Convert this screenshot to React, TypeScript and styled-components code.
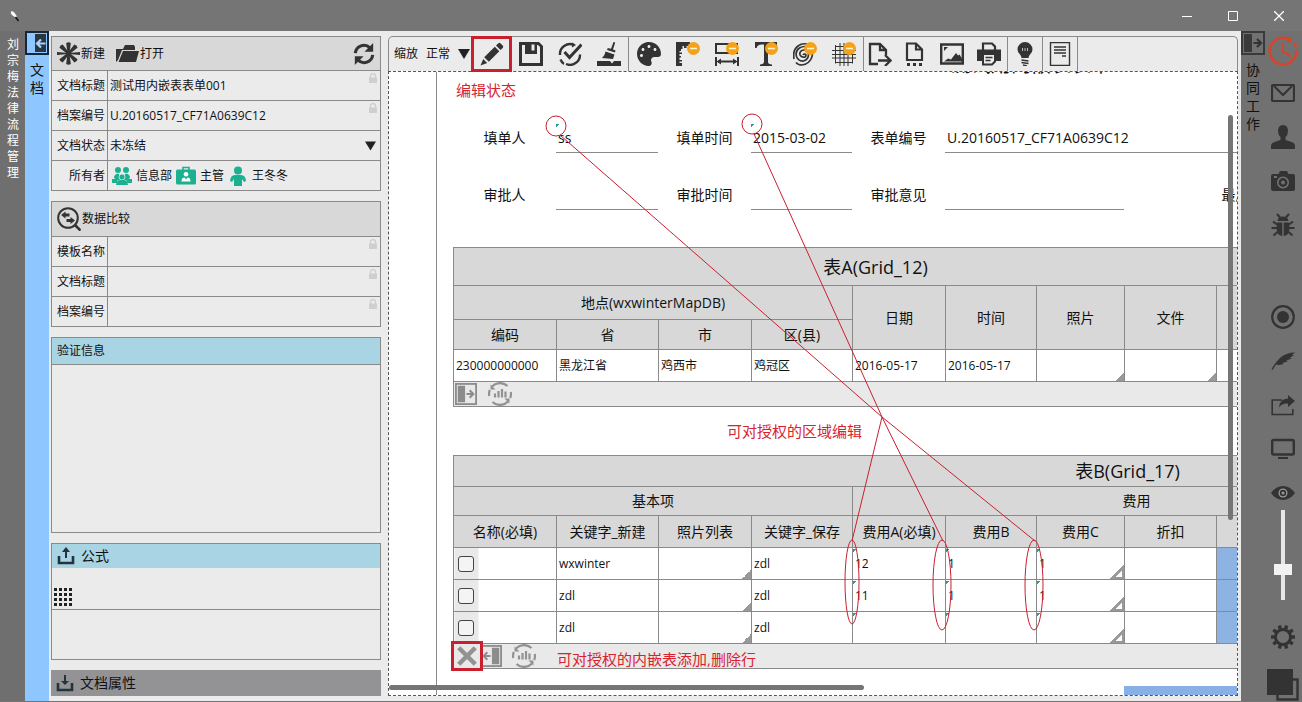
import React from "react";
import styled, { createGlobalStyle, css } from "styled-components";
import { FaPalette } from "react-icons/fa";

const INK = "#333333";
const LINE = "#8a8a8a";
const RED = "#c8202f";
const BAR = "#757575";
const ORANGE = "#f5a21b";
const GREEN = "#1bb190";

const GlobalStyle = createGlobalStyle`
  *, *::before, *::after { box-sizing: border-box; }
  body {
    margin: 0;
    background: #ebebeb;
    color: #111;
    font-family: "Open Sans", "Noto Sans CJK SC", sans-serif;
    font-size: 12px;
    line-height: 18px;
  }
  button, input, select { font: inherit; color: inherit; }
  svg { display: block; flex: none; }
`;

/* ---------- shell ---------- */

const Shell = styled.div`
  height: 100vh;
  display: flex;
  flex-direction: column;
  border-bottom: 1px solid ${BAR};
  overflow: hidden;
`;

const TitleBar = styled.header`
  flex: none;
  height: 31px;
  padding-left: 9px;
  display: flex;
  align-items: center;
  background: ${BAR};
  color: #fff;
`;

const WindowButtons = styled.div`
  margin-left: auto;
  display: flex;
`;

const WindowButton = styled.button`
  width: 46px;
  height: 31px;
  padding: 0;
  border: 0;
  background: none;
  color: #fff;
  display: grid;
  place-items: center;
`;

const Body = styled.div`
  flex: 1;
  min-height: 0;
  display: flex;
`;

const OwnerRail = styled.aside`
  flex: none;
  width: 25px;
  padding: 6px 6px 0 7px;
  background: #6f6f6f;
  color: #fff;
  line-height: 16px;
  word-break: break-all;
`;

const SideTab = styled.aside<{ $tone: string }>`
  flex: none;
  width: 24px;
  display: flex;
  flex-direction: column;
  align-items: center;
  background: ${(p) => p.$tone};
`;

const SideToggle = styled.button`
  width: 24px;
  height: 24px;
  padding: 0;
  border: 0;
  background: none;
`;

const SideLabel = styled.div`
  width: 14px;
  margin-top: 6px;
  font-size: 14px;
  line-height: 18px;
  word-break: break-all;
`;

/* ---------- left panel ---------- */

const Properties = styled.section`
  flex: none;
  width: 339px;
  padding: 5px 7px 5px 2px;
  display: flex;
  flex-direction: column;
  gap: 10px;
`;

const Card = styled.div<{ $grow?: boolean }>`
  border: 1px solid ${LINE};
  ${(p) => p.$grow && css`flex: 1; min-height: 0;`}
`;

const CardHead = styled.div<{ $height: number; $tone?: string; $big?: boolean; $line?: boolean }>`
  height: ${(p) => p.$height}px;
  padding: 0 5px;
  display: flex;
  align-items: center;
  gap: ${(p) => (p.$big ? 6 : 10)}px;
  background: ${(p) => p.$tone ?? "#d8d8d8"};
  font-size: ${(p) => (p.$big ? 14 : 12)}px;
  ${(p) => p.$line && css`border-bottom: 1px solid ${LINE};`}
`;

const HeadButton = styled.button`
  padding: 0;
  border: 0;
  background: none;
  display: flex;
  align-items: center;
  gap: 1px;
  &:last-child:not(:only-child) { margin-left: auto; }
`;

const FormRow = styled.div`
  display: flex;
  height: 30px;
  border-top: 1px solid ${LINE};
`;

const RowLabel = styled.label`
  flex: none;
  width: 56px;
  padding-right: 2px;
  border-right: 1px solid ${LINE};
  line-height: 29px;
  text-align: right;
`;

const RowValue = styled.div`
  flex: 1;
  min-width: 0;
  display: flex;
  position: relative;
`;

const PlainInput = styled.input`
  flex: 1;
  min-width: 0;
  padding: 0 2px;
  border: 0;
  background: none;
  outline: none;
`;

const PlainSelect = styled.select`
  flex: 1;
  min-width: 0;
  padding: 0 2px;
  border: 0;
  background: none;
  appearance: none;
  outline: none;
`;

const LockMark = styled.span`
  position: absolute;
  top: 2px;
  right: 2px;
`;

const Arrow = styled.span`
  position: absolute;
  right: 4px;
  top: 50%;
  transform: translateY(-50%);
  pointer-events: none;
`;

const Owners = styled.div`
  display: flex;
  align-items: center;
  gap: 4px;
  padding-left: 4px;
`;

const FormulaBody = styled.div`
  height: 42px;
  padding: 20px 2px 0;
  border-bottom: 1px solid ${LINE};
`;

const FormulaSpace = styled.div`
  height: 49px;
`;

/* ---------- editor ---------- */

const Editor = styled.main`
  flex: 1;
  min-width: 0;
  padding: 5px 3px 5px 0;
  display: flex;
  flex-direction: column;
`;

const Toolbar = styled.div`
  flex: none;
  height: 35px;
  display: flex;
  border: 1px solid ${LINE};
  border-bottom: 0;
  border-radius: 5px 5px 0 0;
`;

const ZoomField = styled.label`
  flex: none;
  width: 83px;
  padding-left: 5px;
  display: flex;
  align-items: center;
  gap: 8px;
  white-space: nowrap;
`;

const ZoomSelect = styled.span`
  position: relative;
  display: flex;
  width: 46px;
`;

const ZoomArrow = styled(Arrow)`
  right: 2px;
`;

const ZoomNative = styled(PlainSelect)`
  padding: 0;
`;

const ToolGroup = styled.div`
  display: flex;
  border-right: 1px solid ${LINE};
`;

const Tool = styled.button<{ $width?: number; $marked?: boolean }>`
  width: ${(p) => p.$width ?? 39}px;
  padding: 0;
  border: 0;
  background: none;
  color: ${INK};
  display: grid;
  place-items: center;
  ${(p) => p.$marked && css`
    outline: 3px solid ${RED};
    outline-offset: -2px;
    position: relative;
    z-index: 1;
  `}
`;

const Canvas = styled.div`
  flex: 1;
  min-height: 0;
  position: relative;
  overflow: hidden;
  background: #fff;
  border: 1px dashed #555;
`;

const Sheet = styled.article`
  width: 1440px;
  min-height: 100%;
  margin-left: 47px;
  padding-left: 16px;
  border-left: 1px solid ${LINE};
  display: flow-root;
`;

const SheetTitle = styled.h1`
  width: 1156px;
  margin: -21px 0 -1px;
  font-size: 20px;
  font-weight: 400;
  line-height: 28px;
  text-align: center;
`;

const Note = styled.p<{ $height: number; $indent: number }>`
  margin: 0;
  padding-left: ${(p) => p.$indent}px;
  color: #d8232f;
  font-size: 15px;
  line-height: ${(p) => p.$height}px;
  white-space: nowrap;
`;

const Fields = styled.div`
  margin: 21px 0 37px;
  display: grid;
  grid-template-columns: 103px 102px 93px 101px 93px 91px 88px 92px 81px;
  grid-auto-rows: 30px;
  row-gap: 27px;
  font-size: 14px;
`;

const FieldLabel = styled.label`
  line-height: 30px;
  text-align: center;
  white-space: nowrap;
`;

const editMark = css`
  background-image: linear-gradient(135deg, #2a9d8f 50%, transparent 50%);
  background-repeat: no-repeat;
  background-size: 4px 4px;
  background-position: 0 1px;
`;

const FieldInput = styled.input<{ $span?: number; $editable?: boolean }>`
  grid-column: span ${(p) => p.$span ?? 1};
  min-width: 0;
  padding: 0 2px;
  border: 0;
  border-bottom: 1px solid ${LINE};
  background: none;
  outline: none;
  ${(p) => p.$editable && editMark}
`;

const Grid = styled.table<{ $width: number }>`
  width: ${(p) => p.$width}px;
  table-layout: fixed;
  border-collapse: collapse;
  line-height: 18px;
`;

const Row = styled.tr<{ $height: number }>`
  height: ${(p) => p.$height}px;
`;

const Head = styled.th<{ $title?: boolean }>`
  padding: 0;
  border: 1px solid ${LINE};
  background: #d8d8d8;
  font-size: ${(p) => (p.$title ? 18 : 14)}px;
  font-weight: 400;
  white-space: nowrap;
`;

type Corner = "solid" | "hollow";

const Cell = styled.td<{ $corner?: Corner; $edit?: boolean; $blue?: boolean }>`
  padding: 0 2px;
  border: 1px solid ${LINE};
  white-space: nowrap;
  ${(p) => p.$blue && css`background-color: #8db3e2;`}
  ${(p) => p.$edit && !p.$corner && editMark}
  ${(p) => p.$corner === "solid" && css`
    background: linear-gradient(135deg, transparent 50%, #999 50%) right bottom / 9px 9px no-repeat;
  `}
  ${(p) => p.$corner === "hollow" && css`
    background:
      linear-gradient(135deg, #2a9d8f 50%, transparent 50%) 0 1px / 4px 4px no-repeat,
      linear-gradient(#999, #999) right bottom / 12px 2px no-repeat,
      linear-gradient(#999, #999) right bottom / 2px 12px no-repeat,
      linear-gradient(135deg, transparent 50%, #999 50%, #999 64%, transparent 64%) right bottom / 14px 14px no-repeat;
  `}
`;

const PickCell = styled(Cell)`
  padding: 0;
  background: linear-gradient(90deg, #e9e9e9 24px, #fff 24px);
`;

const Tick = styled.input`
  appearance: none;
  display: block;
  width: 16px;
  height: 16px;
  margin: 0 0 0 4px;
  border: 1px solid #444;
  border-radius: 3px;
  background: #f4f4f4;
`;

const FootCell = styled.td`
  padding: 0;
  border: 1px solid ${LINE};
  background: #e9e9e9;
`;

const FootBar = styled.div`
  height: 24px;
  display: flex;
  align-items: flex-start;
`;

const FootButton = styled.button<{ $width: number; $marked?: boolean }>`
  width: ${(p) => p.$width}px;
  height: 24px;
  padding: 0;
  border: 0;
  background: none;
  color: #929292;
  display: grid;
  place-items: center;
  ${(p) => p.$marked && css`outline: 3px solid ${RED}; position: relative;`}
`;

const BlueStrip = styled.div`
  width: 177px;
  height: 32px;
  margin: 17px 0 0 671px;
  background: #86b0e6;
`;

const Overlay = styled.svg`
  position: absolute;
  top: 0;
  left: 0;
  width: 100%;
  height: 100%;
  pointer-events: none;
`;

const ScrollThumb = styled.div<{ $axis: "x" | "y" }>`
  position: absolute;
  border-radius: 3px;
  background: ${BAR};
  ${(p) => (p.$axis === "y"
    ? css`right: 4px; top: 43px; width: 5px; height: 65%;`
    : css`left: 0; bottom: 5px; height: 5px; width: 56%;`)}
`;

/* ---------- right rail ---------- */

const ActionRail = styled.nav`
  flex: none;
  width: 37px;
  padding: 5px 2px 0 0;
  display: flex;
  flex-direction: column;
  align-items: center;
  background: #717171;
`;

const ActionGroup = styled.div<{ $top: number }>`
  margin-top: ${(p) => p.$top}px;
  display: flex;
  flex-direction: column;
  align-items: center;
  gap: 20px;
`;

const Action = styled.button`
  padding: 0;
  border: 0;
  background: none;
  color: ${INK};
`;

const Slider = styled.input`
  appearance: none;
  writing-mode: vertical-lr;
  direction: rtl;
  width: 18px;
  height: 90px;
  margin: 5px 0 0;
  background: linear-gradient(90deg, transparent 7px, #e6e6e6 7px, #e6e6e6 11px, transparent 11px);
  &::-webkit-slider-thumb {
    appearance: none;
    width: 18px;
    height: 11px;
    background: #f2f2f2;
  }
`;

/* ---------- icons ---------- */

const Icon = ({ size = 24, box = "0 0 24 24", children }: { size?: number; box?: string; children: React.ReactNode }) => (
  <svg width={size} height={size} viewBox={box} fill="currentColor" aria-hidden="true">{children}</svg>
);

const Minus = () => (
  <g>
    <circle cx="17.500" cy="6.500" r="6.500" fill={ORANGE} />
    <path d="M14 6.500h7" stroke="#fff3c8" strokeWidth="1.600" />
  </g>
);

const AsteriskIcon = () => (
  <Icon size={23}>
    {[0, 45, 135, 180, 225, 315].map((a) => (
      <path key={a} d="M11 12 9.600 1q2.400-1.600 4.800 0L13 12z" fill={INK} transform={`rotate(${a} 12 12)`} />
    ))}
    <path d="M0 10.500l12 1 12-1v3l-12-1-12 1z" fill={INK} />
  </Icon>
);

const FolderIcon = () => (
  <Icon>
    <path d="M1 20V7h7l2-4h9l1 2v3H7L3 18z" fill={INK} />
    <path d="M8 9h16l-3 11H3.500z" fill={INK} />
  </Icon>
);

const RefreshIcon = () => (
  <Icon size={22}>
    <g fill="none" stroke={INK} strokeWidth="3.400">
      <path d="M2.500 11A9.500 9.500 0 0 1 18.500 5.200" />
      <path d="M21.500 13A9.500 9.500 0 0 1 5.500 18.800" />
    </g>
    <path d="M22 0v9.500h-9.500zM2 24v-9.500h9.500z" fill={INK} />
  </Icon>
);

const CompareIcon = () => (
  <Icon>
    <circle cx="11" cy="11" r="9.800" fill="none" stroke={INK} strokeWidth="2" />
    <path d="M18 18l5.500 5.500" stroke={INK} strokeWidth="2.600" />
    <path d="M4 8l4.500-3.500v2h4v3h-4v2zM18 13.500 13.500 10v2h-4v3h4v2z" fill={INK} />
  </Icon>
);

const LockIcon = () => (
  <Icon size={10} box="0 0 10 10">
    <path d="M2.500 5V3a2.500 2.500 0 0 1 5 0v2" fill="none" stroke="#cfcfcf" strokeWidth="1.300" />
    <path d="M1 4.500h8V10H1z" fill="#cfcfcf" />
  </Icon>
);

const DownTriangle = ({ size = 12 }: { size?: number }) => (
  <svg width={size} height="10" viewBox="0 0 12 10" aria-hidden="true"><path d="M0 0h12L6 10z" fill="#222" /></svg>
);

const TeamIcon = () => (
  <Icon size={20} box="0 0 20 20">
    <g fill={GREEN}>
      <circle cx="6" cy="4" r="3" /><circle cx="14" cy="4" r="3" />
      <path d="M2 12q0-4 4-4.500l4 4 4-4q4 .5 4 4.500l-3 2H5z" />
      <path d="M0 13h6l-1 4H0zM20 13h-6l1 4h5z" />
      <circle cx="10" cy="11" r="3" stroke="#ebebeb" strokeWidth=".8" />
      <path d="M4 19q1-5 4-5h4q3 0 4 5z" />
    </g>
  </Icon>
);

const BadgeIcon = () => (
  <Icon size={20} box="0 0 20 20">
    <path d="M7 4V1.500h6V4" fill="none" stroke={GREEN} strokeWidth="1.600" />
    <rect x="0" y="3.500" width="20" height="15" rx="1.500" fill={GREEN} />
    <circle cx="10" cy="8.300" r="2.300" fill="#fff" />
    <path d="M5.500 15.500q0-4 3-4l1.500 2 1.500-2q3 0 3 4z" fill="#fff" />
  </Icon>
);

const PersonIcon = () => (
  <Icon size={20} box="0 0 20 20">
    <g fill={GREEN}>
      <circle cx="10" cy="4.500" r="4" />
      <path d="M2 15q.5-6 5-6h6q4.500 0 5 6l-2 1-2-3v7H6v-7l-2 3z" />
    </g>
  </Icon>
);

const TrayIcon = ({ up }: { up?: boolean }) => (
  <Icon size={18} box="0 0 18 18">
    <path d="M2 9v7h14V9" fill="none" stroke="#24343c" strokeWidth="2.600" />
    <path d={up ? "M9 0l4 5h-3v6H8V5H5z" : "M9 11l4-4h-3V1H8v6H5z"} fill="#24343c" />
  </Icon>
);

const DotsIcon = () => (
  <Icon size={18} box="0 0 18 18">
    {[0, 5, 10, 15].map((y) => [0, 5, 10, 15].map((x) => (
      <rect key={`${x}-${y}`} x={x} y={y} width="3" height="3" fill="#222" />
    )))}
  </Icon>
);

type PanelIconProps = { size: number; side: "left" | "right"; line: string; bar: string; arrow: string; inside?: boolean };

const PanelIcon = ({ size, side, line, bar, arrow, inside }: PanelIconProps) => (
  <Icon size={size}>
    <g transform={side === "right" ? "translate(24 0) scale(-1 1)" : undefined}>
      <rect x="1" y="1" width="22" height="22" fill="none" stroke={line} strokeWidth="2" />
      <rect x="3" y="3" width={inside ? 11 : 8} height="18" fill={bar} />
      <path
        d={inside ? "M3.500 12.500h8M8 8.500l4 4-4 4" : "M12.500 12h7.500M16 8l4 4-4 4"}
        fill="none" stroke={arrow} strokeWidth="2.200"
      />
    </g>
  </Icon>
);

const StatsIcon = () => (
  <Icon>
    <g fill="none" stroke="currentColor" strokeWidth="2.200">
      <path d="M1.200 14A11 11 0 0 1 1.800 8M4 4.500A11 11 0 0 1 19.500 4M22.800 10A11 11 0 0 1 22.200 16M20 19.500A11 11 0 0 1 4.500 20" />
      <path d="M7 15.500v-4M10.500 15.500V9M14 15.500V7M17.500 15.500v-6" />
    </g>
    <path d="M2.500 2.500v5h5zM21.500 21.500v-5h-5z" />
  </Icon>
);

const PencilIcon = () => (
  <Icon>
    <path d="M4.200 15.300 14.800 4.800l4.500 4.500L8.800 19.800zM3.200 17l4 4L.5 23.500zM16 3.600 18.200 1.400q1.200-1.200 2.400 0l2.100 2.100q1.200 1.200 0 2.400l-2.200 2.200z" />
  </Icon>
);

const SaveIcon = () => (
  <Icon>
    <path fillRule="evenodd" d="M0 0h20l4 4v20H0zM3 3v18h18V5l-2-2h-1v9H6V3zM12.500 2.500v6h3v-6z" />
  </Icon>
);

const CheckIcon = () => (
  <Icon>
    <g fill="none" stroke="currentColor">
      <path d="M2 13A10 10 0 0 1 16 3M22 12.500A10 10 0 0 1 8 22M2.500 17.500Q4 21 6 21.800" strokeWidth="2.400" />
      <path d="M6.500 10l5 5.500L23.500 2.500" strokeWidth="3" />
    </g>
    <path d="M14 .5l4 2.500-4 2.500z" />
  </Icon>
);

const BroomIcon = () => (
  <Icon>
    <path d="M16.500 0l1.700.5-2.200 7 2.500 1-.5 2-8-2.500.8-2 3.200.8zM8.500 9.500l9 3-1.500 4.500-11-1q3-2.500 3.500-6.500zM0 24v-5h13l2 2.500 2-2.500h7v5z" />
  </Icon>
);

const RulerIcon = () => (
  <Icon>
    <path d="M0 0h14v6h-2V4h-1.500v2H8V4H6.500v3H5v2H3.500v1.500H6V12H3.500v2H5v1.500H3.500V18H6v1.500H3.500V21H6v3H0z" />
    <Minus />
  </Icon>
);

const WidthIcon = () => (
  <Icon>
    <path d="M1 2h21v9H1zM1 15v9M23 15v9M3 19.500h18" fill="none" stroke="currentColor" strokeWidth="2" />
    <path d="M1.500 19.500 6 16.500v6zM22.500 19.500 18 16.500v6z" />
    <Minus />
  </Icon>
);

const TextIcon = () => (
  <Icon>
    <path d="M1 0h22v6h-1.500q-1-3.500-5-3.500H14V20q0 2 4 2.500V24H6v-1.500q4-.5 4-2.500V2.500H7.500q-4 0-5 3.500H1z" />
    <Minus />
  </Icon>
);

const SpiralIcon = () => (
  <Icon>
    <path d="M10 13a1.500 1.500 0 1 1 1 2M11 15a3.500 3.500 0 0 1-4-4.500Q8 8 11 8t4.500 4.500q0 5-5 6.500-5 .5-7-4.500Q2 9 6.500 6q5-3 10 0Q21 10 18.500 16T9 23Q5 23 3 20.500M1 17Q-.5 8 5 4 9 1 14 2" fill="none" stroke="currentColor" strokeWidth="1.700" />
    <Minus />
  </Icon>
);

const MeshIcon = () => (
  <Icon>
    <path d="M0 8.500h24M0 16h24M8 1v23M16 1v23M3 4.500h10M3 20.500h18M3.500 3v18.500M20.500 9v12.500M0 12.500h24M12 1v23" fill="none" stroke="currentColor" strokeWidth="1" />
    <Minus />
  </Icon>
);

const ExportIcon = () => (
  <Icon>
    <path d="M10 22H2V2h10l6 6v5M12 2v6h6M10 18.500h11M17 13l5.500 5.500L17 24" fill="none" stroke="currentColor" strokeWidth="2.300" />
  </Icon>
);

const PageDotsIcon = () => (
  <Icon>
    <path d="M5 18V1.500h9l6 6V18zM14 1.500v6h6" fill="none" stroke="currentColor" strokeWidth="2.200" />
    <path d="M5 21h3v3H5zM11 21h3v3h-3zM17 21h3v3h-3z" />
  </Icon>
);

const ImageIcon = () => (
  <Icon>
    <path d="M1.200 2.500h21.600v19H1.200z" fill="none" stroke="currentColor" strokeWidth="2.400" />
    <path d="M4 19.500l4-3 3 1 5-6.500 2 2.500 1.500-1 2.500 4v3zM4 5h4l-4 4z" />
  </Icon>
);

const PrinterIcon = () => (
  <Icon>
    <path d="M6 8V1.500h9l3 3V8" fill="none" stroke="currentColor" strokeWidth="2.200" />
    <path d="M0 7.500h24V19h-5v-6H5v6H0z" />
    <path d="M6 13v9.500h9l3-3V13" fill="none" stroke="currentColor" strokeWidth="2" />
    <path d="M8.500 15.500h7M8.500 18.500h5" stroke="currentColor" strokeWidth="1.400" />
  </Icon>
);

const BulbIcon = () => (
  <Icon>
    <path d="M12 0a7.500 7.500 0 0 1 7.500 7.500q0 3-2.500 5-1.500 1.500-1.500 3.500h-7q0-2-1.500-3.500-2.500-2-2.500-5A7.500 7.500 0 0 1 12 0z" />
    <path d="M8.500 18l7 1M8.500 20.500l7 1M10 23l4 1" stroke="currentColor" strokeWidth="1.400" />
    <path d="M9.500 6v3M12 6v3M14.500 6v3" fill="none" stroke="#bbb" strokeWidth="1" />
  </Icon>
);

const MemoIcon = () => (
  <Icon>
    <path d="M2.500.5h19v23h-19zM6 5h12M6 8h12M6 11h12M14 14h4" fill="none" stroke="currentColor" strokeWidth="1.400" />
  </Icon>
);

const ClockIcon = () => (
  <Icon size={30} box="0 0 30 30">
    <path d="M22 3.800A13.300 13.300 0 1 0 28.300 14M28 11l-1.500-3.500" fill="none" stroke="#d8432b" strokeWidth="2.600" />
    <path d="M17 5.500 24 .5v6z" fill="#d8432b" />
    <path d="M15 7v9l8 4" fill="none" stroke="#d8432b" strokeWidth="2" />
  </Icon>
);

const MailIcon = () => (
  <Icon>
    <rect x="1" y="4" width="22" height="16" rx="1" fill="none" stroke="currentColor" strokeWidth="2.200" />
    <path d="M3 5l9 9 9-9" fill="none" stroke="currentColor" strokeWidth="2" />
  </Icon>
);

const UserIcon = () => (
  <Icon>
    <path d="M12 0q5 0 5 6 0 4-2.500 6v3l6 2q3.500 1 3.500 4v3H0v-3q0-3 3.500-4l6-2v-3Q7 10 7 6q0-6 5-6z" />
  </Icon>
);

const CameraIcon = () => (
  <Icon>
    <path fillRule="evenodd" d="M2 5h5.500L9 2h7l1.500 3H22q2 0 2 2v13q0 2-2 2H2q-2 0-2-2V7q0-2 2-2zm10 2.500a6 6 0 1 0 .01 0zM3 7h3v2H3z" />
    <circle cx="12" cy="13.500" r="4.400" /><circle cx="12" cy="13.500" r="2" fill="#717171" />
  </Icon>
);

const BugIcon = () => (
  <Icon>
    <path d="M6.500 8Q7 3.500 12 3.500T17.500 8zM6 9.500h5.300V23Q5.500 22 5.500 15zM18 9.500h-5.300V23q5.800-1 5.800-8z" />
    <path d="M9 4.500 6 1M15 4.500 18 1M6 11.500 2 8.500M18 11.500l4-3M6 15H.5M18 15h5.500M6.500 19l-4 3.500M17.500 19l4 3.500" stroke="currentColor" strokeWidth="2" />
  </Icon>
);

const RecordIcon = () => (
  <Icon>
    <circle cx="12" cy="12" r="10.800" fill="none" stroke="currentColor" strokeWidth="2.200" />
    <circle cx="12" cy="12" r="6" />
  </Icon>
);

const FeatherIcon = () => (
  <Icon>
    <path d="M.5 20.500Q3 15 9 9q6-5.500 15-5.500l-3 2.500 2 .5-4 2 1.500 1-5 2 1 1-5 1.500 1 1q-5 1.500-7.500.5L1.500 21z" />
  </Icon>
);

const ShareIcon = () => (
  <Icon>
    <path d="M11 7H1.200v14.500h20.600V16" fill="none" stroke="currentColor" strokeWidth="1.600" />
    <path d="M17 2l7 6-7 6v-3.500q-6-.5-9 4 .5-8.500 9-9z" />
  </Icon>
);

const MonitorIcon = () => (
  <Icon>
    <rect x="1.200" y="3" width="21.600" height="14.500" rx="1.500" fill="none" stroke="currentColor" strokeWidth="2.400" />
    <path d="M7 20h10v2H7z" />
  </Icon>
);

const EyeIcon = () => (
  <Icon>
    <path d="M0 12Q5 5 12 5t12 7q-5 7-12 7T0 12z" />
    <circle cx="12" cy="12" r="4.500" fill="#999" /><circle cx="12" cy="12" r="3.200" /><circle cx="12" cy="12" r="1.500" fill="#999" />
  </Icon>
);

const GearIcon = () => (
  <Icon>
    <circle cx="12" cy="12" r="7.600" fill="none" stroke="currentColor" strokeWidth="3" />
    {[18, 54, 90, 126, 162, 198, 234, 270, 306, 342].map((a) => (
      <rect key={a} x="10.300" y="0" width="3.400" height="4" transform={`rotate(${a} 12 12)`} />
    ))}
  </Icon>
);

const LayersIcon = () => (
  <Icon size={32} box="0 0 32 32">
    <path d="M0 0h26v26H0z" />
    <path d="M26 10.500h4.500v20h-20V26" fill="none" stroke="currentColor" strokeWidth="2.400" />
  </Icon>
);

/* ---------- data ---------- */

const COLUMNS = [103, 102, 93, 101, 93, 91, 88, 92];

const ROWS_B = [
  { key: "wxwinter", saved: "zdl", a: "12", b: "1", c: "1" },
  { key: "zdl", saved: "zdl", a: "11", b: "1", c: "1" },
  { key: "zdl", saved: "zdl", a: "", b: "", c: "" },
];

const ACTIONS_TOP = [
  ["邮件", <MailIcon />], ["联系人", <UserIcon />], ["拍照", <CameraIcon />], ["调试", <BugIcon />],
] as const;

const ACTIONS_MID = [
  ["录制", <RecordIcon />], ["签名", <FeatherIcon />], ["分享", <ShareIcon />], ["屏幕", <MonitorIcon />], ["查看", <EyeIcon />],
] as const;

const Columns = ({ extra }: { extra: number[] }) => (
  <colgroup>
    {[...COLUMNS, ...extra].map((w, i) => <col key={i} style={{ width: w }} />)}
  </colgroup>
);

const LockedRow = ({ id, label, value = "" }: { id: string; label: string; value?: string }) => (
  <FormRow>
    <RowLabel htmlFor={id}>{label}</RowLabel>
    <RowValue>
      <PlainInput id={id} defaultValue={value} readOnly />
      <LockMark><LockIcon /></LockMark>
    </RowValue>
  </FormRow>
);

const PropertiesPanel = () => (
  <Properties>
    <Card>
      <CardHead $height={33}>
        <HeadButton><AsteriskIcon />新建</HeadButton>
        <HeadButton><FolderIcon />打开</HeadButton>
        <HeadButton aria-label="刷新"><RefreshIcon /></HeadButton>
      </CardHead>
      <LockedRow id="doc-title" label="文档标题" value="测试用内嵌表表单001" />
      <LockedRow id="doc-number" label="档案编号" value="U.20160517_CF71A0639C12" />
      <FormRow>
        <RowLabel htmlFor="doc-state">文档状态</RowLabel>
        <RowValue>
          <PlainSelect id="doc-state"><option>未冻结</option></PlainSelect>
          <Arrow><DownTriangle size={11} /></Arrow>
        </RowValue>
      </FormRow>
      <FormRow>
        <RowLabel as="span">所有者</RowLabel>
        <Owners>
          <TeamIcon />信息部<BadgeIcon />主管<PersonIcon />王冬冬
        </Owners>
      </FormRow>
    </Card>

    <Card>
      <CardHead $height={34}>
        <HeadButton><CompareIcon />数据比较</HeadButton>
      </CardHead>
      <LockedRow id="tpl-name" label="模板名称" />
      <LockedRow id="cmp-title" label="文档标题" />
      <LockedRow id="cmp-number" label="档案编号" />
    </Card>

    <Card $grow>
      <CardHead $height={27} $tone="#a9d4e3" $line>验证信息</CardHead>
    </Card>

    <Card>
      <CardHead $height={24} $tone="#a9d4e3" $big><TrayIcon up />公式</CardHead>
      <FormulaBody><DotsIcon /></FormulaBody>
      <FormulaSpace />
    </Card>

    <CardHead $height={26} $tone="#939396" $big><TrayIcon />文档属性</CardHead>
  </Properties>
);

const EditorToolbar = () => (
  <Toolbar>
    <ZoomField>
      缩放
      <ZoomSelect>
        <ZoomNative><option>正常</option></ZoomNative>
        <ZoomArrow><DownTriangle /></ZoomArrow>
      </ZoomSelect>
    </ZoomField>
    <ToolGroup>
      <Tool aria-label="编辑" $marked><PencilIcon /></Tool>
      <Tool aria-label="保存"><SaveIcon /></Tool>
      <Tool aria-label="验证"><CheckIcon /></Tool>
      <Tool aria-label="清理"><BroomIcon /></Tool>
    </ToolGroup>
    <ToolGroup>
      <Tool aria-label="颜色"><FaPalette size={24} /></Tool>
      <Tool aria-label="标尺"><RulerIcon /></Tool>
      <Tool aria-label="宽度"><WidthIcon /></Tool>
      <Tool aria-label="文字"><TextIcon /></Tool>
      <Tool aria-label="水印"><SpiralIcon /></Tool>
      <Tool aria-label="网格"><MeshIcon /></Tool>
    </ToolGroup>
    <ToolGroup>
      <Tool aria-label="导出" $width={32}><ExportIcon /></Tool>
      <Tool aria-label="页面" $width={36}><PageDotsIcon /></Tool>
      <Tool aria-label="图片"><ImageIcon /></Tool>
      <Tool aria-label="打印" $width={36}><PrinterIcon /></Tool>
    </ToolGroup>
    <ToolGroup>
      <Tool aria-label="提示" $width={34}><BulbIcon /></Tool>
    </ToolGroup>
    <ToolGroup>
      <Tool aria-label="备忘" $width={34}><MemoIcon /></Tool>
    </ToolGroup>
  </Toolbar>
);

const TableA = () => (
  <Grid $width={845}>
    <Columns extra={[81]} />
    <thead>
      <Row $height={38}><Head $title colSpan={9}>表A(Grid_12)</Head></Row>
      <Row $height={34}>
        <Head colSpan={4}>地点(wxwinterMapDB)</Head>
        {["日期", "时间", "照片", "文件", "多文件"].map((t) => <Head key={t} rowSpan={2}>{t}</Head>)}
      </Row>
      <Row $height={30}>
        {["编码", "省", "市", "区(县)"].map((t) => <Head key={t}>{t}</Head>)}
      </Row>
    </thead>
    <tbody>
      <Row $height={32}>
        <Cell>230000000000</Cell>
        <Cell>黑龙江省</Cell>
        <Cell>鸡西市</Cell>
        <Cell>鸡冠区</Cell>
        <Cell>2016-05-17</Cell>
        <Cell>2016-05-17</Cell>
        <Cell $corner="solid" />
        <Cell $corner="solid" />
        <Cell $corner="solid" />
      </Row>
    </tbody>
    <tfoot>
      <tr>
        <FootCell colSpan={9}>
          <FootBar>
            <FootButton $width={24} aria-label="展开"><PanelIcon size={22} side="left" line="#8c8c8c" bar="#8c8c8c" arrow="#8c8c8c" /></FootButton>
            <FootButton $width={44} aria-label="统计"><StatsIcon /></FootButton>
          </FootBar>
        </FootCell>
      </tr>
    </tfoot>
  </Grid>
);

const TableB = () => (
  <Grid $width={1349}>
    <Columns extra={[102, 102, 190, 191]} />
    <thead>
      <Row $height={31}><Head $title colSpan={12}>表B(Grid_17)</Head></Row>
      <Row $height={29}>
        <Head colSpan={4}>基本项</Head>
        <Head colSpan={6}>费用</Head>
        <Head colSpan={2} />
      </Row>
      <Row $height={32}>
        {["名称(必填)", "关键字_新建", "照片列表", "关键字_保存", "费用A(必填)", "费用B", "费用C", "折扣"].map((t) => (
          <Head key={t}>{t}</Head>
        ))}
        <Head /><Head /><Head /><Head />
      </Row>
    </thead>
    <tbody>
      {ROWS_B.map((r, i) => (
        <Row $height={32} key={i}>
          <PickCell><Tick type="checkbox" aria-label={`选择第${i + 1}行`} /></PickCell>
          <Cell>{r.key}</Cell>
          <Cell $corner="solid" />
          <Cell>{r.saved}</Cell>
          <Cell $edit>{r.a}</Cell>
          <Cell $edit>{r.b}</Cell>
          <Cell $corner="hollow">{r.c}</Cell>
          <Cell />
          <Cell $blue /><Cell $blue /><Cell /><Cell />
        </Row>
      ))}
    </tbody>
    <tfoot>
      <tr>
        <FootCell colSpan={12}>
          <FootBar>
            <FootButton $width={26} $marked aria-label="删除行">
              <Icon size={22}><path d="M3 3l18 18M21 3 3 21" stroke="currentColor" strokeWidth="5" /></Icon>
            </FootButton>
            <FootButton $width={22} aria-label="收起"><PanelIcon size={22} side="right" line="#8c8c8c" bar="#8c8c8c" arrow="#8c8c8c" /></FootButton>
            <FootButton $width={44} aria-label="统计"><StatsIcon /></FootButton>
            <Note $height={30} $indent={11}>可对授权的内嵌表添加,删除行</Note>
          </FootBar>
        </FootCell>
      </tr>
    </tfoot>
  </Grid>
);

const Markup = () => (
  <Overlay fill="none" stroke={RED} strokeWidth="1" aria-hidden="true">
    <circle cx="167" cy="54" r="10" />
    <circle cx="363" cy="52" r="10" />
    <path d="M171 63 493 345 646 469" />
    <path d="M365 62 493 345 554 469" />
    <path d="M493 345 463 469" />
    <ellipse cx="463" cy="510" rx="7" ry="42" />
    <ellipse cx="553" cy="513" rx="9" ry="45" />
    <ellipse cx="645" cy="513" rx="9" ry="45" />
  </Overlay>
);

const FormCanvas = () => (
  <Canvas>
    <Sheet>
      <SheetTitle>测试用内嵌表表单</SheetTitle>
      <Note $height={24} $indent={3}>编辑状态</Note>
      <Fields>
        <FieldLabel htmlFor="f-author">填单人</FieldLabel>
        <FieldInput id="f-author" defaultValue="ss" $editable />
        <FieldLabel htmlFor="f-date">填单时间</FieldLabel>
        <FieldInput id="f-date" defaultValue="2015-03-02" $editable />
        <FieldLabel htmlFor="f-number">表单编号</FieldLabel>
        <FieldInput id="f-number" defaultValue="U.20160517_CF71A0639C12" $span={4} />
        <FieldLabel htmlFor="f-approver">审批人</FieldLabel>
        <FieldInput id="f-approver" />
        <FieldLabel htmlFor="f-approved">审批时间</FieldLabel>
        <FieldInput id="f-approved" />
        <FieldLabel htmlFor="f-opinion">审批意见</FieldLabel>
        <FieldInput id="f-opinion" $span={2} />
        <span />
        <FieldLabel as="span">最后审批人</FieldLabel>
      </Fields>
      <TableA />
      <Note $height={48} $indent={274}>可对授权的区域编辑</Note>
      <TableB />
      <BlueStrip />
    </Sheet>
    <Markup />
    <ScrollThumb $axis="y" />
    <ScrollThumb $axis="x" />
  </Canvas>
);

export default function App() {
  return (
    <>
      <GlobalStyle />
      <Shell>
        <TitleBar>
          <Icon size={12} box="0 0 12 12">
            <path d="M2 1.500q2-1 4 2l2 3-1.500 1L3 5Q1 3 2 1.500z" fill="#fff" />
            <path d="M6.500 7l3 4" stroke="#111" strokeWidth="1.500" />
          </Icon>
          <WindowButtons>
            <WindowButton aria-label="最小化"><Icon size={10} box="0 0 10 10"><path d="M0 5.500h10" stroke="#fff" /></Icon></WindowButton>
            <WindowButton aria-label="最大化"><Icon size={10} box="0 0 10 10"><path d="M.5.5h9v9h-9z" fill="none" stroke="#fff" /></Icon></WindowButton>
            <WindowButton aria-label="关闭"><Icon size={10} box="0 0 10 10"><path d="M0 0l10 10M10 0 0 10" stroke="#fff" strokeWidth="1.300" /></Icon></WindowButton>
          </WindowButtons>
        </TitleBar>
        <Body>
          <OwnerRail>刘宗梅法律流程管理</OwnerRail>
          <SideTab $tone="#8ec6ff">
            <SideToggle aria-label="收起文档"><PanelIcon size={24} side="right" line="#14273d" bar="#2a3540" arrow="#a9d4ff" inside /></SideToggle>
            <SideLabel>文档</SideLabel>
          </SideTab>
          <PropertiesPanel />
          <Editor>
            <EditorToolbar />
            <FormCanvas />
          </Editor>
          <SideTab $tone="#717171">
            <SideToggle aria-label="展开协同工作"><PanelIcon size={24} side="left" line="#3a3a3a" bar="#3a3a3a" arrow="#333" /></SideToggle>
            <SideLabel>协同工作</SideLabel>
          </SideTab>
          <ActionRail>
            <Action aria-label="历史"><ClockIcon /></Action>
            <ActionGroup $top={15}>
              {ACTIONS_TOP.map(([name, icon]) => <Action key={name} aria-label={name}>{icon}</Action>)}
            </ActionGroup>
            <ActionGroup $top={68}>
              {ACTIONS_MID.map(([name, icon]) => <Action key={name} aria-label={name}>{icon}</Action>)}
            </ActionGroup>
            <Slider type="range" aria-label="缩放" min={0} max={100} defaultValue={32} />
            <ActionGroup $top={25}>
              <Action aria-label="设置"><GearIcon /></Action>
              <Action aria-label="图层"><LayersIcon /></Action>
            </ActionGroup>
          </ActionRail>
        </Body>
      </Shell>
    </>
  );
}
